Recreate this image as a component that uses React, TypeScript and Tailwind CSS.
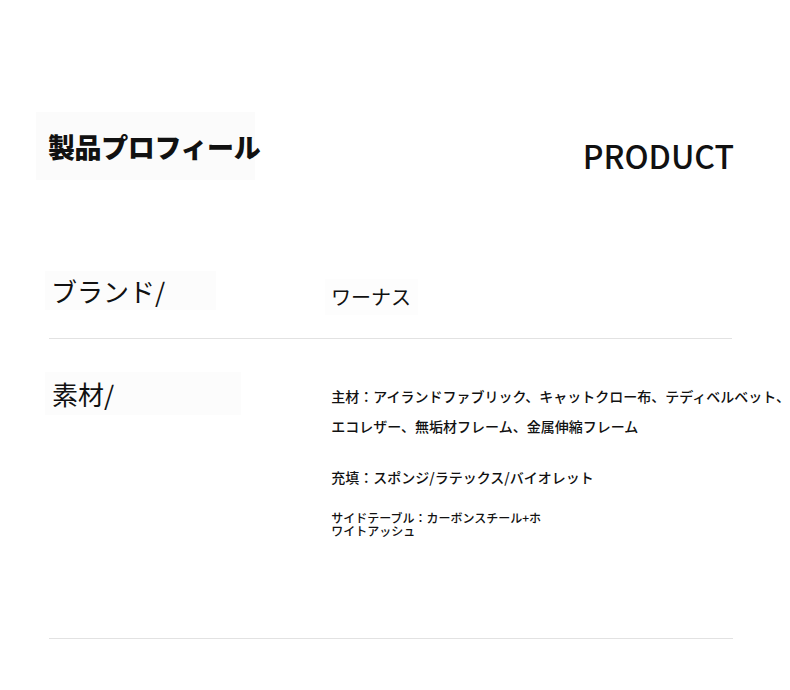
import React from "react";

const jp = { fontFamily: '"Noto Sans CJK JP", "Noto Sans", sans-serif' };

export default function App() {
  return (
    <div className="w-[790px] h-[690px] overflow-hidden bg-white text-[#111]" style={jp}>
      <div className="h-[112px]" />
      {/* Header */}
      <div className="flex items-start justify-between pl-[36px] pr-[56px]">
        <div className="w-[219px] h-[68px] bg-[#fbfbfb] flex items-center pl-[12px] whitespace-nowrap">
          <span className="text-[27px] leading-none font-black tracking-[-0.4px]">製品プロフィール</span>
        </div>
        <div className="mt-[27px] text-[32px] leading-none font-medium">PRODUCT</div>
      </div>

      {/* Brand row */}
      <div className="mt-[91px] flex items-start">
        <div className="ml-[45px] w-[171px] h-[39px] bg-[#fcfcfc] flex items-center pl-[6px] whitespace-nowrap">
          <span className="text-[26px] leading-none">ブランド/</span>
        </div>
        <div className="ml-[109px] mt-[8px] w-[93px] h-[36px] bg-[#fdfdfd] flex items-center pl-[6px] whitespace-nowrap">
          <span className="text-[20px] leading-none">ワーナス</span>
        </div>
      </div>

      <div className="mt-[23px] ml-[49px] w-[683px] h-px bg-[#e2e2e2]" />

      {/* Materials row */}
      <div className="mt-[33px] h-[266px] flex items-start">
        <div className="ml-[45px] w-[198px] h-[43px] bg-[#fcfcfc] flex items-center pl-[7px] whitespace-nowrap">
          <span className="text-[26px] leading-none">素材/</span>
        </div>
        <div className="ml-[90px] flex flex-col items-start">
          <div className="pt-[9px] text-[14px] leading-[30px] font-medium whitespace-nowrap">
            主材：アイランドファブリック、キャットクロー布、テディベルベット、
            <br />
            エコレザー、無垢材フレーム、金属伸縮フレーム
          </div>
          <div className="mt-[26px] text-[14px] leading-[20px] font-medium whitespace-nowrap">
            充填：スポンジ/ラテックス/バイオレット
          </div>
          <div className="mt-[24px] w-[214px] text-[12px] leading-[13px] font-medium">
            サイドテーブル：カーボンスチール+ホワイトアッシュ
          </div>
        </div>
      </div>

      <div className="ml-[49px] w-[684px] h-px bg-[#e2e2e2]" />
    </div>
  );
}
